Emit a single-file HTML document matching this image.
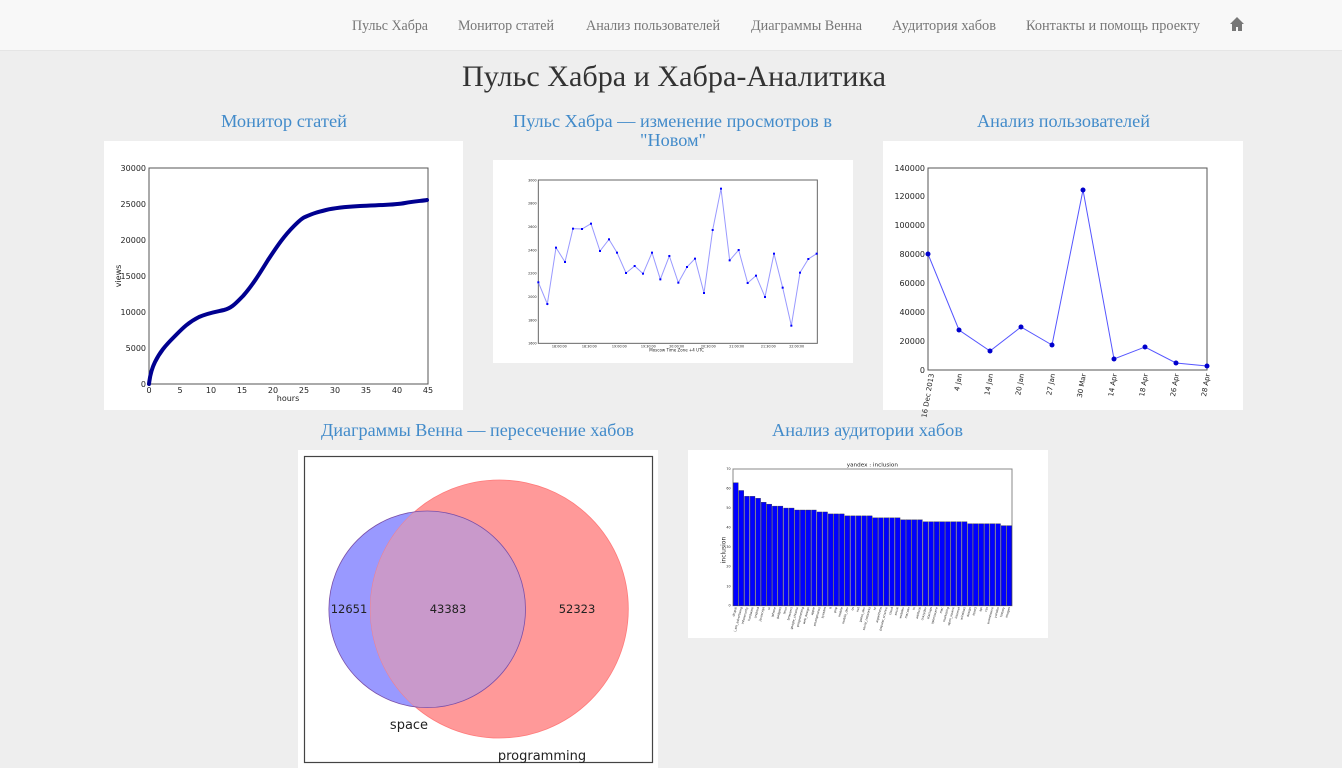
<!DOCTYPE html>
<html><head><meta charset="utf-8"><style>
html,body{margin:0;padding:0;background:#eeeeee;width:1342px;height:768px;overflow:hidden}
svg{display:block}
.nav{font-family:"Liberation Serif","Noto Serif CJK SC",serif;font-size:15px;fill:#777}
.t{font-family:"Liberation Serif","Noto Serif CJK SC",serif;font-size:18px;fill:#428bca}
.s{font-family:"DejaVu Sans","Liberation Sans",sans-serif;fill:#222}
</style></head><body>
<svg width="1342" height="768" viewBox="0 0 1342 768" xmlns="http://www.w3.org/2000/svg">
<defs><clipPath id="bc"><circle cx="427.2" cy="609.3" r="98.3"/></clipPath></defs>
<rect x="0" y="0" width="1342" height="50" fill="#f8f8f8"/>
<rect x="0" y="50" width="1342" height="1" fill="#e5e5e5"/>
<text class="nav" x="352" y="30" textLength="76" lengthAdjust="spacingAndGlyphs">Пульс Хабра</text>
<text class="nav" x="458" y="30" textLength="96" lengthAdjust="spacingAndGlyphs">Монитор статей</text>
<text class="nav" x="586" y="30" textLength="134" lengthAdjust="spacingAndGlyphs">Анализ пользователей</text>
<text class="nav" x="751" y="30" textLength="111" lengthAdjust="spacingAndGlyphs">Диаграммы Венна</text>
<text class="nav" x="892" y="30" textLength="104" lengthAdjust="spacingAndGlyphs">Аудитория хабов</text>
<text class="nav" x="1026" y="30" textLength="174" lengthAdjust="spacingAndGlyphs">Контакты и помощь проекту</text>
<path d="M1237 17 L1230 24 L1232 24 L1232 31 L1236 31 L1236 27 L1238 27 L1238 31 L1242 31 L1242 24 L1244 24 Z" fill="#777"/>
<text x="462" y="86" font-family="Liberation Serif,serif" font-size="30" fill="#333" textLength="424" lengthAdjust="spacingAndGlyphs">Пульс Хабра и Хабра-Аналитика</text>
<text class="t" x="221" y="127" textLength="126" lengthAdjust="spacingAndGlyphs">Монитор статей</text>
<text class="t" x="513" y="127" textLength="319" lengthAdjust="spacingAndGlyphs">Пульс Хабра — изменение просмотров в</text>
<text class="t" x="640" y="146" textLength="66" lengthAdjust="spacingAndGlyphs">"Новом"</text>
<text class="t" x="977" y="127" textLength="173" lengthAdjust="spacingAndGlyphs">Анализ пользователей</text>
<text class="t" x="321" y="436" textLength="313" lengthAdjust="spacingAndGlyphs">Диаграммы Венна — пересечение хабов</text>
<text class="t" x="772" y="436" textLength="191" lengthAdjust="spacingAndGlyphs">Анализ аудитории хабов</text>

<rect x="104" y="141" width="359" height="269" fill="#fff"/>
<rect x="149" y="168" width="279" height="216" fill="none" stroke="#555" stroke-width="1"/>
<g class="s" font-size="8" text-anchor="end">
<text x="146" y="387">0</text><text x="146" y="351">5000</text><text x="146" y="315">10000</text><text x="146" y="279">15000</text><text x="146" y="243">20000</text><text x="146" y="207">25000</text><text x="146" y="171">30000</text>
</g>
<g class="s" font-size="8" text-anchor="middle">
<text x="149" y="393">0</text><text x="180" y="393">5</text><text x="211" y="393">10</text><text x="242" y="393">15</text><text x="273" y="393">20</text><text x="304" y="393">25</text><text x="335" y="393">30</text><text x="366" y="393">35</text><text x="397" y="393">40</text><text x="428" y="393">45</text>
<text x="288" y="401">hours</text>
<text x="0" y="0" transform="translate(121,276) rotate(-90)">views</text>
</g>
<path d="M149 384 C150 375 152 368 155 362 C160 352 165 346 174 337 C181 330 187 323 199 317 C208 313 215 312 224 310 C232 308 236 303 243 296 C252 286 260 273 268 260 C276 248 283 237 294 226 C298 222 302 218 305 217 C314 213 318 212 326 210 C334 208 342 207 360 206 C380 205 395 205 405 203 C415 201 422 201 427 200" fill="none" stroke="#000090" stroke-width="4" stroke-linecap="round"/>

<rect x="493" y="160" width="360" height="203" fill="#fff"/>
<svg x="490" y="160" width="365" height="205" viewBox="0 0 1095 615">
<rect x="145" y="60" width="837" height="490" fill="none" stroke="#666" stroke-width="3"/>
<polyline fill="none" stroke="#9999ff" stroke-width="3" points="145,367 172,432 198,263 225,306 249,206 276,207 303,191 330,273 357,238 381,278 408,339 434,318 459,341 486,278 511,358 538,288 565,368 591,321 615,296 642,399 668,210 693,86 719,301 746,270 773,369 798,347 825,411 852,281 878,383 904,497 930,338 955,297 980,281"/>
<g fill="#00f"><rect x="142" y="364" width="6" height="6"/><rect x="169" y="429" width="6" height="6"/><rect x="195" y="260" width="6" height="6"/><rect x="222" y="303" width="6" height="6"/><rect x="246" y="203" width="6" height="6"/><rect x="273" y="204" width="6" height="6"/><rect x="300" y="188" width="6" height="6"/><rect x="327" y="270" width="6" height="6"/><rect x="354" y="235" width="6" height="6"/><rect x="378" y="275" width="6" height="6"/><rect x="405" y="336" width="6" height="6"/><rect x="431" y="315" width="6" height="6"/><rect x="456" y="338" width="6" height="6"/><rect x="483" y="275" width="6" height="6"/><rect x="508" y="355" width="6" height="6"/><rect x="535" y="285" width="6" height="6"/><rect x="562" y="365" width="6" height="6"/><rect x="588" y="318" width="6" height="6"/><rect x="612" y="293" width="6" height="6"/><rect x="639" y="396" width="6" height="6"/><rect x="665" y="207" width="6" height="6"/><rect x="690" y="83" width="6" height="6"/><rect x="716" y="298" width="6" height="6"/><rect x="743" y="267" width="6" height="6"/><rect x="770" y="366" width="6" height="6"/><rect x="795" y="344" width="6" height="6"/><rect x="822" y="408" width="6" height="6"/><rect x="849" y="278" width="6" height="6"/><rect x="875" y="380" width="6" height="6"/><rect x="901" y="494" width="6" height="6"/><rect x="927" y="335" width="6" height="6"/><rect x="952" y="294" width="6" height="6"/><rect x="977" y="278" width="6" height="6"/></g>
<g class="s" font-size="10" fill="#666" text-anchor="end"><text x="140" y="64">3000</text><text x="140" y="134">2800</text><text x="140" y="204">2600</text><text x="140" y="274">2400</text><text x="140" y="344">2200</text><text x="140" y="414">2000</text><text x="140" y="484">1800</text><text x="140" y="554">1600</text></g>
<g class="s" font-size="10" fill="#666" text-anchor="middle"><text x="208" y="562">18:00:00</text><text x="298" y="562">18:30:00</text><text x="388" y="562">19:00:00</text><text x="475" y="562">19:30:00</text><text x="560" y="562">20:00:00</text><text x="655" y="562">20:30:00</text><text x="740" y="562">21:00:00</text><text x="835" y="562">21:30:00</text><text x="920" y="562">22:00:00</text><text x="560" y="575" font-size="12">Moscow Time Zone +4 UTC</text></g>
</svg>

<rect x="883" y="141" width="360" height="269" fill="#fff"/>
<rect x="928" y="168" width="279" height="202" fill="none" stroke="#555"/>
<g class="s" font-size="8" text-anchor="end">
<text x="925" y="373">0</text><text x="925" y="344">20000</text><text x="925" y="315">40000</text><text x="925" y="286">60000</text><text x="925" y="257">80000</text><text x="925" y="228">100000</text><text x="925" y="199">120000</text><text x="925" y="171">140000</text>
</g>
<g class="s" font-size="7" text-anchor="end">
<text transform="translate(934,374) rotate(-80)">16 Dec 2013</text><text transform="translate(962,374) rotate(-80)">4 Jan</text><text transform="translate(993,374) rotate(-80)">14 Jan</text><text transform="translate(1024,374) rotate(-80)">20 Jan</text><text transform="translate(1055,374) rotate(-80)">27 Jan</text><text transform="translate(1086,374) rotate(-80)">30 Mar</text><text transform="translate(1117,374) rotate(-80)">14 Apr</text><text transform="translate(1148,374) rotate(-80)">18 Apr</text><text transform="translate(1179,374) rotate(-80)">26 Apr</text><text transform="translate(1210,374) rotate(-80)">28 Apr</text>
</g>
<polyline fill="none" stroke="#5555ff" stroke-width="1" points="928,254 959,330 990,351 1021,327 1052,345 1083,190 1114,359 1145,347 1176,363 1207,366"/>
<g fill="#0000cc"><circle cx="928" cy="254" r="2.5"/><circle cx="959" cy="330" r="2.5"/><circle cx="990" cy="351" r="2.5"/><circle cx="1021" cy="327" r="2.5"/><circle cx="1052" cy="345" r="2.5"/><circle cx="1083" cy="190" r="2.5"/><circle cx="1114" cy="359" r="2.5"/><circle cx="1145" cy="347" r="2.5"/><circle cx="1176" cy="363" r="2.5"/><circle cx="1207" cy="366" r="2.5"/></g>

<rect x="298" y="450" width="360" height="318" fill="#fff"/>
<rect x="304.5" y="456.5" width="348" height="306" fill="none" stroke="#444" stroke-width="1.2"/>
<circle cx="427.2" cy="609.3" r="98.3" fill="#9999ff"/>
<circle cx="499.3" cy="609" r="129" fill="#ff9999" stroke="#ff7a7a" stroke-width="0.8"/>
<circle cx="499.3" cy="609" r="129" fill="#c999cb" clip-path="url(#bc)"/>
<circle cx="427.2" cy="609.3" r="98.3" fill="none" stroke="#7a4fa8" stroke-width="0.8"/>
<g class="s" font-size="11.5" fill="#111" text-anchor="middle">
<text x="349" y="613">12651</text><text x="448" y="613">43383</text><text x="577" y="613">52323</text>
<text x="409" y="729" font-size="13">space</text><text x="542" y="760" font-size="13">programming</text>
</g>

<rect x="688" y="450" width="360" height="188" fill="#fff"/>
<svg x="688" y="450" width="360" height="190" viewBox="0 0 1080 570">
<rect x="135" y="57" width="837" height="410" fill="none" stroke="#888" stroke-width="3"/>
<g id="bars" fill="#0000ff" stroke="#333" stroke-width="1"></g>
<text x="553" y="50" class="s" font-size="17" text-anchor="middle">yandex : inclusion</text>
<text class="s" font-size="18" transform="translate(112,300) rotate(-90)" text-anchor="middle">inclusion</text>
<g class="s" font-size="10" text-anchor="end"><text x="128" y="470">0</text><text x="128" y="412">10</text><text x="128" y="353">20</text><text x="128" y="294">30</text><text x="128" y="236">40</text><text x="128" y="177">50</text><text x="128" y="119">60</text><text x="128" y="60">70</text></g>
<g id="lbl" class="s" font-size="9" fill="#333" text-anchor="end"></g>
</svg>
</svg>
<script>
var v=[63,59,56,56,55,53,52,51,51,50,50,49,49,49,49,48,48,47,47,47,46,46,46,46,46,45,45,45,45,45,44,44,44,44,43,43,43,43,43,43,43,43,42,42,42,42,42,42,41,41];
var n=["drupal","i_am_advertising","infosecurity","hardware","android","javascript","ui","iphone","gadgets","linux","browsers","google_chrome","programming","web_design","apple","smartphones","sysadm","it","php","mobile","mobile_dev","os","net","game_dev","social_networks","hr","algorithms","popular_science","cloud","social","webdev","macosx","hi","artificial","crazydev","startups","opensource","mac","marketing","open_source","internet","windows","design","html5","api","css","ecommerce","yandex","history","images"];
var g=document.getElementById('bars'),l=document.getElementById('lbl'),h='',t='',w=837/50;
for(var i=0;i<50;i++){var x=135+i*w,y=467-v[i]*410/70;h+='<rect x="'+(x+1)+'" y="'+y+'" width="'+(w-2)+'" height="'+(467-y)+'"/>';t+='<text transform="translate('+(x+w/2+3)+',472) rotate(-75)">'+n[i]+'</text>';}
g.innerHTML=h;l.innerHTML=t;
</script>
</body></html>
